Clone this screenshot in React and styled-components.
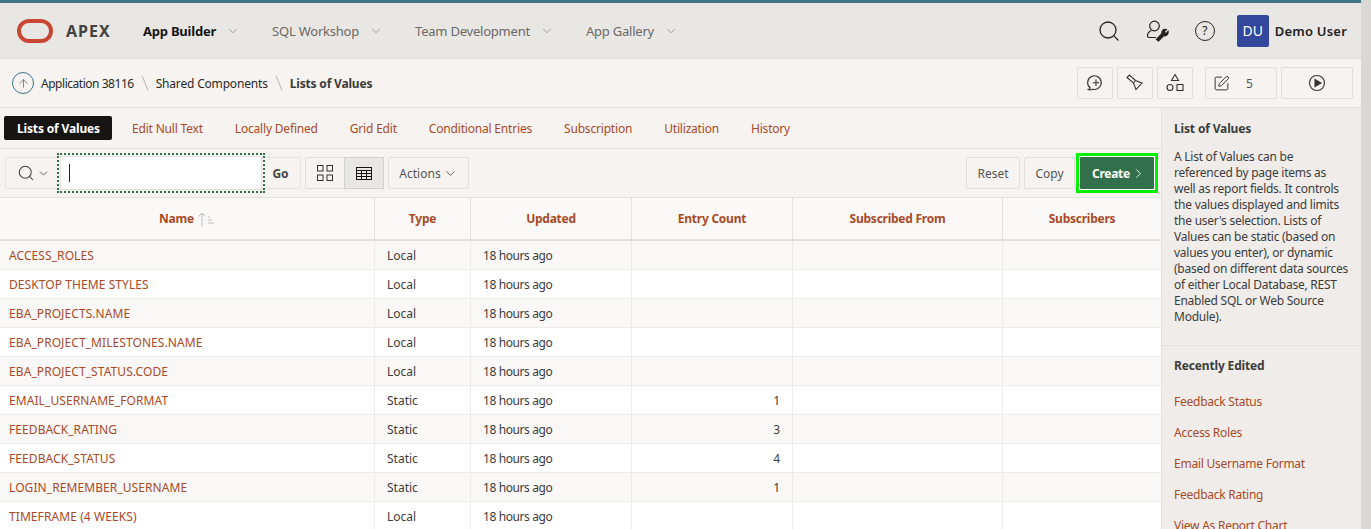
import React from "react";
import styled, { createGlobalStyle } from "styled-components";
import { ChevronDown, ChevronRight, Search, ArrowUp, SquarePen } from "lucide-react";

const GlobalStyle = createGlobalStyle`
    html, body {
        margin: 0;
        height: 529px;
        overflow: hidden;
        background: #f6f3f1;
        font-family: "Noto Sans", "Open Sans", sans-serif;
    }
    * {
        box-sizing: border-box;
    }
`;

const navItems = [
    { label: "App Builder", active: true },
    { label: "SQL Workshop" },
    { label: "Team Development" },
    { label: "App Gallery" },
];

const tabs = [
    "Lists of Values",
    "Edit Null Text",
    "Locally Defined",
    "Grid Edit",
    "Conditional Entries",
    "Subscription",
    "Utilization",
    "History",
];

const rows = [
    ["ACCESS_ROLES", "Local", ""],
    ["DESKTOP THEME STYLES", "Local", ""],
    ["EBA_PROJECTS.NAME", "Local", ""],
    ["EBA_PROJECT_MILESTONES.NAME", "Local", ""],
    ["EBA_PROJECT_STATUS.CODE", "Local", ""],
    ["EMAIL_USERNAME_FORMAT", "Static", "1"],
    ["FEEDBACK_RATING", "Static", "3"],
    ["FEEDBACK_STATUS", "Static", "4"],
    ["LOGIN_REMEMBER_USERNAME", "Static", "1"],
    ["TIMEFRAME (4 WEEKS)", "Local", ""],
];

const recent = [
    "Feedback Status",
    "Access Roles",
    "Email Username Format",
    "Feedback Rating",
    "View As Report Chart",
];

const columns = "375px 96px 161px 161px 210px 158px";
const linkColor = "#a84a26";

const Slash = () => (
    <SlashMark width="8" height="16" viewBox="0 0 8 16">
        <path d="M1 .5l6 15" fill="none" stroke="#b9b6b2" strokeWidth="1" />
    </SlashMark>
);

const App = () => {
    return (
        <>
            <GlobalStyle />
            <Page>
                <Main>
                    <Header>
                        <Logo>
                            <svg width="36" height="24" viewBox="0 0 36 24">
                                <rect x="2" y="2" width="32" height="20" rx="10" fill="none" stroke="#c74634" strokeWidth="4" />
                            </svg>
                            <span>APEX</span>
                        </Logo>
                        <Nav>
                            {navItems.map((item) => (
                                <NavItem key={item.label} $active={item.active}>
                                    {item.label}
                                    <ChevronDown size={14} strokeWidth={1.1} />
                                </NavItem>
                            ))}
                        </Nav>
                        <HeaderTools>
                            <HeaderSearch size={24} strokeWidth={1.3} />
                            <svg width="24" height="24" viewBox="0 0 24 24" fill="none" stroke="#222" strokeWidth="1.2">
                                <circle cx="9.500" cy="7" r="4.800" />
                                <path d="M6.500 11.500C4 12.500 2.500 15 2.500 17c0 1 .5 1.500 1.500 1.500h7" />
                                <path d="M11.500 20.500l5.500-6c-.6-2.500 1.200-4.700 4.300-4l-2 2 .4 1.400 1.400.5 2-2c.4 3-1.900 5-4.300 4.200l-5.300 5.400z" fill="#222" />
                            </svg>
                            <HelpCircle>?</HelpCircle>
                            <UserBox>
                                <Avatar>DU</Avatar>
                                <span>Demo User</span>
                            </UserBox>
                        </HeaderTools>
                    </Header>
                    <Crumbs>
                        <UpCircle>
                            <ArrowUp size={13} strokeWidth={1.3} />
                        </UpCircle>
                        <Crumb $tight>Application 38116</Crumb>
                        <Slash />
                        <Crumb>Shared Components</Crumb>
                        <Slash />
                        <Crumb $current>Lists of Values</Crumb>
                        <CrumbTools>
                            <IconButton $width={36}>
                                <svg width="18" height="18" viewBox="0 0 18 18" fill="none" stroke="#333" strokeWidth="1.1">
                                    <path d="M1.500 15.500c1.500 0 2.300-.5 2.800-1.500A6.800 6.800 0 1 1 6.800 15.200c-1.800.6-3.700.7-5.300.3z" />
                                    <path d="M10 5.500v6.500M6.800 8.700h6.400" />
                                </svg>
                            </IconButton>
                            <IconButton $width={36}>
                                <svg width="18" height="18" viewBox="0 0 18 18" fill="none" stroke="#333" strokeWidth="1.1">
                                    <path d="M1 3.500L3.500 1l6 5.500 6.500 2.500-6 6.500-2.500-6.500z" />
                                    <path d="M7.500 9L9.500 6.500" />
                                </svg>
                            </IconButton>
                            <IconButton $width={36} $gap={8}>
                                <svg width="20" height="20" viewBox="0 0 20 20" fill="none" stroke="#333" strokeWidth="1.1">
                                    <path d="M10 1.500l3.500 6h-7z" />
                                    <circle cx="5" cy="14.500" r="3" />
                                    <rect x="12" y="11.500" width="6" height="6" />
                                </svg>
                            </IconButton>
                            <CountButton $width={72}>
                                <SquarePen size={17} strokeWidth={1.4} color="#333" />
                                <Count>5</Count>
                            </CountButton>
                            <IconButton $width={72}>
                                <svg width="18" height="18" viewBox="0 0 18 18" fill="none" stroke="#333" strokeWidth="1.1">
                                    <circle cx="9" cy="9" r="7.500" />
                                    <path d="M7 5.500v7l6-3.500z" fill="#333" />
                                </svg>
                            </IconButton>
                        </CrumbTools>
                    </Crumbs>
                    <Body>
                        <Content>
                            <TabBar>
                                {tabs.map((tab, i) => (
                                    <Tab key={tab} $active={i === 0}>{tab}</Tab>
                                ))}
                            </TabBar>
                            <Toolbar>
                                <SearchGroup>
                                    <SearchMenu>
                                        <Search size={18} strokeWidth={1.4} />
                                        <ChevronDown size={13} strokeWidth={1.5} />
                                    </SearchMenu>
                                    <FocusRing>
                                        <SearchInput>
                                            <Caret />
                                        </SearchInput>
                                    </FocusRing>
                                    <GoButton>Go</GoButton>
                                </SearchGroup>
                                <ViewSwitch>
                                    <ViewButton>
                                        <svg width="16" height="16" viewBox="0 0 16 16" fill="none" stroke="#333" strokeWidth="1">
                                            <rect x=".5" y=".5" width="5.500" height="5.500" />
                                            <rect x="10" y=".5" width="5.500" height="5.500" />
                                            <rect x=".5" y="10" width="5.500" height="5.500" />
                                            <rect x="10" y="10" width="5.500" height="5.500" />
                                        </svg>
                                    </ViewButton>
                                    <ViewButton $active>
                                        <svg width="16" height="13" viewBox="0 0 16 13" fill="none" stroke="#161513" strokeWidth="1">
                                            <rect x=".5" y=".5" width="15" height="12" />
                                            <path d="M.5 3.500h15M.5 6.500h15M.5 9.500h15M5.500 3.500v9M10.500 3.500v9" />
                                        </svg>
                                    </ViewButton>
                                </ViewSwitch>
                                <ToolButton $width={81}>
                                    Actions
                                    <ChevronDown size={15} strokeWidth={1.5} />
                                </ToolButton>
                                <ToolSpacer />
                                <ToolButton $width={54}>Reset</ToolButton>
                                <ToolButton $width={51}>Copy</ToolButton>
                                <CreateRing>
                                    <CreateButton>
                                        Create
                                        <ChevronRight size={15} strokeWidth={1.4} />
                                    </CreateButton>
                                </CreateRing>
                            </Toolbar>
                            <Table>
                                <HeadRow>
                                    <HeadCell>
                                        Name
                                        <svg width="18" height="14" viewBox="0 0 18 14" fill="none" stroke="#bbb" strokeWidth="1">
                                            <path d="M5 14V1M1.500 4.500L5 1l3.500 3.500M11 5h2M11 8h4M11 11h6" />
                                        </svg>
                                    </HeadCell>
                                    <HeadCell>Type</HeadCell>
                                    <HeadCell>Updated</HeadCell>
                                    <HeadCell>Entry Count</HeadCell>
                                    <HeadCell>Subscribed From</HeadCell>
                                    <HeadCell>Subscribers</HeadCell>
                                </HeadRow>
                                {rows.map(([name, type, count]) => (
                                    <Row key={name}>
                                        <NameCell>{name}</NameCell>
                                        <Cell>{type}</Cell>
                                        <UpdatedCell>18 hours ago</UpdatedCell>
                                        <CountCell>{count}</CountCell>
                                        <Cell />
                                        <Cell />
                                    </Row>
                                ))}
                            </Table>
                        </Content>
                        <Side>
                            <SideBlock>
                                <SideTitle>List of Values</SideTitle>
                                <SideText>
                                    A List of Values can be referenced by page items as well as report fields. It controls the values displayed and limits the user's selection. Lists of Values can be static (based on values you enter), or dynamic (based on different data sources of either Local Database, REST Enabled SQL or Web Source Module).
                                </SideText>
                            </SideBlock>
                            <RecentBlock>
                                <SideTitle>Recently Edited</SideTitle>
                                <RecentList>
                                    {recent.map((item) => (
                                        <RecentLink key={item}>{item}</RecentLink>
                                    ))}
                                </RecentList>
                            </RecentBlock>
                        </Side>
                    </Body>
                </Main>
                <Scrollbar />
            </Page>
        </>
    );
};

const Page = styled.div`
    display: flex;
    width: 1371px;
    height: 529px;
    overflow: hidden;
`;

const Main = styled.div`
    width: 1361px;
    flex: none;
`;

const Scrollbar = styled.div`
    flex: 1;
    background: #dad8d6;
`;

const Header = styled.header`
    display: flex;
    align-items: center;
    height: 59px;
    padding: 0 14px 0 17px;
    background: #e9e7e3;
    border-top: 3px solid #3e7483;
    border-bottom: 1px solid #e0ddd9;
`;

const Logo = styled.div`
    display: flex;
    align-items: center;
    gap: 13px;
    width: 126px;
    flex: none;

    span {
        font-size: 16px;
        font-weight: 700;
        letter-spacing: 1px;
        color: #444;
    }
`;

const Nav = styled.nav`
    display: flex;
    align-items: center;
    gap: 32px;
`;

const NavItem = styled.div`
    display: flex;
    align-items: center;
    gap: 10px;
    font-size: 13px;
    letter-spacing: -0.22px;
    font-weight: ${(p) => (p.$active ? 700 : 400)};
    color: ${(p) => (p.$active ? "#161513" : "#6b6966")};

    svg {
        color: #777;
    }
`;

const HeaderTools = styled.div`
    display: flex;
    align-items: center;
    gap: 26px;
    margin-left: auto;
    color: #222;
`;

const HeaderSearch = styled(Search)`
    margin-right: -2px;
`;

const HelpCircle = styled.div`
    display: flex;
    align-items: center;
    justify-content: center;
    width: 20px;
    height: 20px;
    border: 1.2px solid #222;
    border-radius: 50%;
    font-size: 12px;
`;

const UserBox = styled.div`
    display: flex;
    align-items: center;
    gap: 6px;
    margin-left: -4px;
    font-size: 13px;
    font-weight: 600;
    letter-spacing: 0.2px;
    color: #222;
`;

const Avatar = styled.div`
    display: flex;
    align-items: center;
    justify-content: center;
    width: 32px;
    height: 32px;
    border-radius: 2px;
    background: #33479c;
    color: #fff;
    font-size: 14px;
    font-weight: 400;
`;

const Crumbs = styled.div`
    display: flex;
    align-items: center;
    height: 49px;
    padding: 0 8px 0 12px;
    background: #f6f3f1;
    border-bottom: 1px solid #e4e1dd;
`;

const UpCircle = styled.div`
    display: flex;
    align-items: center;
    justify-content: center;
    width: 22px;
    height: 22px;
    margin-right: 7px;
    border: 1px solid #3e7483;
    border-radius: 50%;
    color: #555;
`;

const Crumb = styled.span`
    font-size: 12px;
    letter-spacing: ${(p) => (p.$tight ? "-0.47px" : "-0.18px")};
    font-weight: ${(p) => (p.$current ? 700 : 400)};
    color: ${(p) => (p.$current ? "#3d3c3a" : "#2b2a28")};
`;

const SlashMark = styled.svg`
    flex: none;
    margin: 0 7px;
`;

const CrumbTools = styled.div`
    display: flex;
    gap: 4px;
    margin-left: auto;
`;

const IconButton = styled.div`
    display: flex;
    align-items: center;
    justify-content: center;
    width: ${(p) => p.$width}px;
    height: 32px;
    margin-right: ${(p) => p.$gap || 0}px;
    border: 1px solid #e2dfdb;
    border-radius: 2px;
`;

const CountButton = styled(IconButton)`
    justify-content: flex-start;
    gap: 16px;
    padding-left: 7px;
`;

const Count = styled.span`
    font-size: 12px;
    color: #555;
`;

const Body = styled.div`
    display: flex;
`;

const Content = styled.div`
    width: 1161px;
    flex: none;
`;

const TabBar = styled.div`
    display: flex;
    align-items: center;
    gap: 8px;
    height: 41px;
    padding: 0 4px;
    border-bottom: 1px solid #e4e1dd;
`;

const Tab = styled.div`
    display: flex;
    align-items: center;
    height: 24px;
    padding: 0 12px 0 ${(p) => (p.$active ? 13 : 12)}px;
    border-radius: 2px;
    font-size: 12px;
    letter-spacing: ${(p) => (p.$active ? "-0.15px" : "-0.19px")};
    font-weight: ${(p) => (p.$active ? 700 : 400)};
    color: ${(p) => (p.$active ? "#fff" : linkColor)};
    background: ${(p) => (p.$active ? "#161513" : "transparent")};
`;

const Toolbar = styled.div`
    display: flex;
    align-items: center;
    gap: 4px;
    height: 49px;
    padding: 0 3px 0 5px;
    border-bottom: 1px solid #e4e1dd;
`;

const SearchGroup = styled.div`
    display: flex;
    align-items: center;
    width: 296px;
    height: 32px;
    border: 1px solid #e7e4e0;
    border-radius: 2px;
`;

const SearchMenu = styled.div`
    display: flex;
    align-items: center;
    gap: 2px;
    width: 51px;
    padding-left: 11px;
    color: #444;
`;

const FocusRing = styled.div`
    flex: none;
    width: 208px;
    height: 40px;
    padding: 1px;
    border: 2px dotted #2f6f4a;
`;

const SearchInput = styled.div`
    display: flex;
    align-items: center;
    height: 100%;
    padding-left: 8px;
    background: #fff;
    border: 1px solid #e4e1dd;
`;

const Caret = styled.span`
    width: 1px;
    height: 18px;
    background: #222;
`;

const GoButton = styled.div`
    flex: 1;
    padding-right: 4px;
    text-align: center;
    font-size: 12px;
    font-weight: 700;
    color: #444;
`;

const ViewSwitch = styled.div`
    display: flex;
    width: 79px;
    height: 32px;
    border: 1px solid #e2dfdb;
    border-radius: 2px;
`;

const ViewButton = styled.div`
    display: flex;
    flex: 1;
    align-items: center;
    justify-content: center;
    background: ${(p) => (p.$active ? "#e9e7e3" : "transparent")};
    box-shadow: ${(p) => (p.$active ? "0 0 0 1px #d3d0cc" : "none")};
`;

const ToolButton = styled.div`
    display: flex;
    align-items: center;
    justify-content: center;
    gap: 2px;
    width: ${(p) => p.$width}px;
    height: 32px;
    border: 1px solid #e2dfdb;
    border-radius: 2px;
    font-size: 12px;
    color: #555;
`;

const ToolSpacer = styled.div`
    flex: 1;
`;

const CreateRing = styled.div`
    width: 82px;
    height: 40px;
    padding: 1px;
    border: 3px solid #00f000;
    margin-left: -3px;
    background: #fff;
`;

const CreateButton = styled.div`
    display: flex;
    align-items: center;
    justify-content: center;
    gap: 1px;
    height: 100%;
    padding-left: 4px;
    border-radius: 1px;
    background: #31704b;
    color: #fff;
    font-size: 12px;
    font-weight: 700;
    letter-spacing: -0.3px;
`;

const Table = styled.div`
    background: #fff;
`;

const HeadRow = styled.div`
    display: grid;
    grid-template-columns: ${columns};
    height: 43px;
    background: #fbf9f8;
    border-bottom: 2px solid #e4e1dd;
`;

const HeadCell = styled.div`
    display: flex;
    align-items: center;
    justify-content: center;
    gap: 3px;
    font-size: 12px;
    font-weight: 700;
    letter-spacing: -0.25px;
    color: ${linkColor};
    border-right: 1px solid #e4e1dd;

    &:last-child {
        border-right: 0;
    }
`;

const Row = styled.div`
    display: grid;
    grid-template-columns: ${columns};
    height: 29px;
    border-bottom: 1px solid #eeece9;

    &:nth-child(even) {
        background: #faf8f6;
    }
`;

const Cell = styled.div`
    display: flex;
    align-items: center;
    padding: 0 12px;
    font-size: 12px;
    color: #3d3c3a;
    border-right: 1px solid #eeece9;

    &:last-child {
        border-right: 0;
    }
`;

const NameCell = styled(Cell)`
    padding: 0 9px;
    color: ${linkColor};
    letter-spacing: 0.08px;
`;

const UpdatedCell = styled(Cell)`
    letter-spacing: -0.4px;
`;

const CountCell = styled(Cell)`
    justify-content: flex-end;
`;

const Side = styled.aside`
    flex: 1;
    background: #efecea;
    border-left: 1px solid #e4e1dd;
    height: 421px;
`;

const SideBlock = styled.div`
    padding: 13px 12px 20px;
    border-bottom: 1px solid #e4e1dd;
`;

const RecentBlock = styled.div`
    padding: 12px 12px 0;
`;

const SideTitle = styled.div`
    font-size: 12px;
    font-weight: 700;
    line-height: 16px;
    letter-spacing: -0.15px;
    color: #3d3c3a;
`;

const SideText = styled.p`
    margin: 12px 0 0;
    font-size: 12px;
    line-height: 16px;
    letter-spacing: -0.25px;
    color: #3d3c3a;
`;

const RecentList = styled.div`
    display: flex;
    flex-direction: column;
    gap: 15px;
    margin-top: 20px;
`;

const RecentLink = styled.div`
    font-size: 12px;
    line-height: 16px;
    letter-spacing: -0.25px;
    color: ${linkColor};
`;

export default App;
